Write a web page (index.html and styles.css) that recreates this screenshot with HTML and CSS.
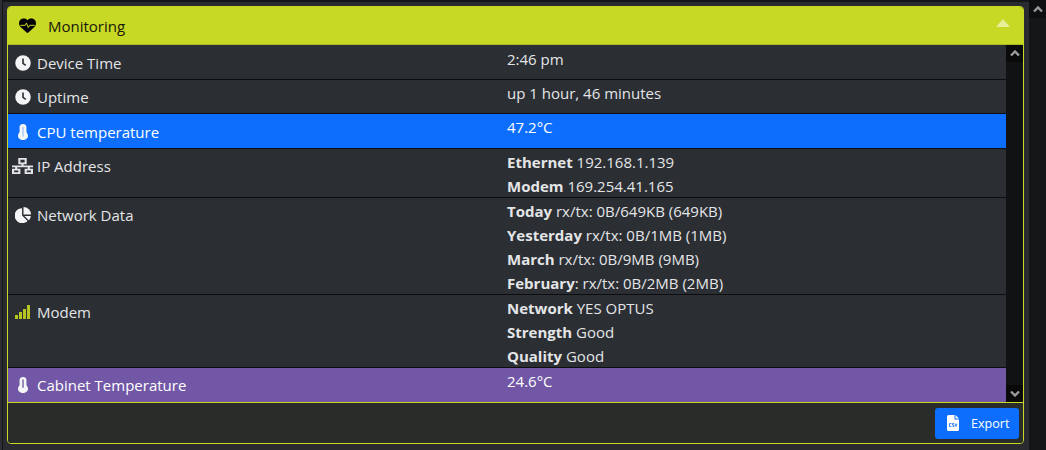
FILE: index.html
```html
<!DOCTYPE html>
<html lang="en">
<head>
<meta charset="utf-8">
<title>Monitoring</title>
<link rel="stylesheet" href="styles.css">
</head>
<body>
<div class="page">
  <main class="content">
    <section class="card">
      <header class="card-head">
        <svg class="head-icon" viewBox="0 0 512 512"><path d="M47.600 300.400L228.300 469.100c7.500 7 17.400 10.900 27.700 10.900s20.200-3.900 27.700-10.900L464.400 300.400c30.400-28.300 47.600-68 47.600-109.500v-5.800c0-69.900-50.500-129.500-119.400-141C347 36.500 300.600 51.400 268 84L256 96 244 84c-32.600-32.600-79-47.500-124.600-39.900C50.500 55.600 0 115.200 0 185.100v5.800c0 41.500 17.200 81.200 47.600 109.500z"/><path class="pulse" d="M40 250H190L225 180L280 320L320 250H472"/></svg>
        <span class="head-title">Monitoring</span>
        <span class="head-caret"></span>
      </header>
      <div class="card-body">
        <div class="rows">
          <div class="row h1">
            <div class="label"><svg class="ico" viewBox="0 0 512 512"><circle cx="256" cy="256" r="248" fill="currentColor"/><path class="hand" d="M256 110V270L345 330"/></svg>Device Time</div>
            <div class="val">2:46 pm</div>
          </div>
          <div class="row h2">
            <div class="label"><svg class="ico" viewBox="0 0 512 512"><circle cx="256" cy="256" r="248" fill="currentColor"/><path class="hand" d="M256 110V270L345 330"/></svg>Uptime</div>
            <div class="val">up 1 hour, 46 minutes</div>
          </div>
          <div class="row h3 blue">
            <div class="label"><svg class="ico" viewBox="0 0 320 512"><path fill="currentColor" d="M160 0C100 0 50 40 50 96v168C20 292 0 338 0 384c0 71 72 128 160 128s160-57 160-128c0-46-20-92-50-120V96C270 40 220 0 160 0z"/><path class="merc" d="M160 90V400"/></svg>CPU temperature</div>
            <div class="val">47.2°C</div>
          </div>
          <div class="row h4">
            <div class="label"><svg class="ico net" viewBox="0 0 20 18" preserveAspectRatio="none"><path fill="currentColor" fill-rule="evenodd" d="M6 0h8v7h-3v1.500h9v2h-3V12h3v6H12v-6h3v-1.500H5V12h3v6H0v-6h3v-1.500H0v-2h9V7H6V0zM8 2v3h4V2zM2 14v2h4v-2zM14 14v2h4v-2z"/></svg>IP Address</div>
            <div class="val"><b>Ethernet</b> 192.168.1.139<br><b>Modem</b> 169.254.41.165</div>
          </div>
          <div class="row h5">
            <div class="label"><svg class="ico" viewBox="0 0 17 17"><path fill="currentColor" d="M7.500 1.200A8 8 0 1 0 13.300 14.800L7.500 9z"/><path fill="currentColor" d="M9 0a8 8 0 0 1 8 8H9z"/><path fill="currentColor" d="M10 9.500h6.800a8 8 0 0 1-2 4.800z"/></svg>Network Data</div>
            <div class="val"><b>Today</b> rx/tx: 0B/649KB (649KB)<br><b>Yesterday</b> rx/tx: 0B/1MB (1MB)<br><b>March</b> rx/tx: 0B/9MB (9MB)<br><b>February</b>: rx/tx: 0B/2MB (2MB)</div>
          </div>
          <div class="row h6">
            <div class="label"><svg class="ico signal" viewBox="0 0 16 14"><rect x="0" y="10" width="3" height="4"/><rect x="4" y="7" width="3" height="7"/><rect x="8" y="4" width="3" height="10"/><rect x="12" y="0" width="3" height="14"/></svg>Modem</div>
            <div class="val"><b>Network</b> YES OPTUS<br><b>Strength</b> Good<br><b>Quality</b> Good</div>
          </div>
          <div class="row h7 purple">
            <div class="label"><svg class="ico" viewBox="0 0 320 512"><path fill="currentColor" d="M160 0C100 0 50 40 50 96v168C20 292 0 338 0 384c0 71 72 128 160 128s160-57 160-128c0-46-20-92-50-120V96C270 40 220 0 160 0z"/><path class="merc2" d="M160 80V340"/></svg>Cabinet Temperature</div>
            <div class="val">24.6°C</div>
          </div>
        </div>
        <div class="vbar">
          <div class="cell"><svg class="chev" viewBox="0 0 10 7"><path d="M1 5.500L5 1.500L9 5.500"/></svg></div>
          <div class="cell"><svg class="chev" viewBox="0 0 10 7"><path d="M1 1.500L5 5.500L9 1.500"/></svg></div>
        </div>
      </div>
      <footer class="card-foot">
        <button class="btn"><svg class="file" viewBox="0 0 12 16"><path fill="currentColor" d="M0 1.500A1.500 1.500 0 0 1 1.500 0H7.500V4.500H12V14.500A1.500 1.500 0 0 1 10.500 16H1.500A1.500 1.500 0 0 1 0 14.500z"/><path fill="currentColor" d="M8.500 0L12 3.500H8.500z"/><path class="csv" d="M4.500 8.500H2.500V11.500H4.500M7 8.500H5.500V10H7V11.500H5.500M8 8.500L9 11.500L10 8.500"/></svg><span>Export</span></button>
      </footer>
    </section>
  </main>
  <aside class="pagebar">
    <div class="cell top"><svg class="chev" viewBox="0 0 10 7"><path d="M1 5.500L5 1.500L9 5.500"/></svg></div>
  </aside>
</div>
</body>
</html>
```
FILE: styles.css
```css
* { box-sizing: border-box; }
html, body { margin: 0; height: 100%; overflow: hidden; }
body {
  background: #2b2e33;
  color: #e6e7e9;
  font: 15px/24px "Open Sans", "Noto Sans", sans-serif;
}
.page { display: flex; height: 450px; }
.content {
  width: 1027px;
  margin-left: 2px;
  padding: 4px 0 0 4px;
  border-left: 1px solid #141517;
  border-top: 2px solid #141517;
  background: #292b30;
}
.card {
  width: 1017px;
  height: 438px;
  border: 1px solid #c8d925;
  border-radius: 4px;
  display: flex;
  flex-direction: column;
  overflow: hidden;
  background: #2a2c2a;
}
.card-head {
  height: 38px;
  flex: none;
  display: flex;
  align-items: center;
  background: #c8d925;
  color: #17180a;
  padding: 0 13px 0 11px;
  border-bottom: 1px solid #abba1f;
}
.head-icon { width: 17px; height: 17px; margin-right: 12px; }
.pulse { fill: none; stroke: #c8d925; stroke-width: 30; }
.head-title { flex: 1; }
.head-caret {
  width: 0; height: 0;
  border: 7px solid transparent;
  border-top: 0;
  border-bottom: 8px solid #e6ee9a;
  margin-top: -5px;
}
.card-body { display: flex; height: 358px; flex: none; border-bottom: 1px solid #c8d925; }
.rows { flex: none; width: 998px; background: #2b2e33; }
.row { display: grid; grid-template-columns: 499px 499px; border-bottom: 1px solid #0c0d0e; color: #e4e5e7; }
.row:last-child { border-bottom: 0; }
.h1 { height: 35px; } .h2 { height: 34px; } .h3 { height: 35px; } .h4 { height: 49px; }
.h5 { height: 97px; } .h6 { height: 73px; } .h7 { height: 34px; }
.blue { background: #0d6efd; color: #fff; }
.purple { background: #7157a5; color: #fff; }
.label { display: flex; align-items: center; height: 24px; margin-top: 5px; padding-left: 7px; }
.h1 .label, .h3 .label { margin-top: 6px; }
.val { margin-top: 1px; }
.h1 .val { margin-top: 2px; }
.val b { font-weight: 700; }
.ico { width: 16px; height: 16px; margin-right: 6px; color: #f4f5f6; flex: none; }
.net { width: 21px; margin-left: -3px; margin-right: 4px; color: #e4e5e7; }
.hand { fill: none; stroke: #2b2e33; stroke-width: 52; }
.merc { fill: none; stroke: #7fb2fe; stroke-width: 30; }
.merc2 { fill: none; stroke: #7157a5; stroke-width: 44; }
.signal { fill: #b5c41f; }
.vbar {
  width: 17px; flex: none; background: #111214;
  display: flex; flex-direction: column; justify-content: space-between;
}
.cell { width: 17px; height: 17px; background: #0a0a0b; display: flex; align-items: center; justify-content: center; }
.chev { width: 10px; height: 7px; }
.chev path { fill: none; stroke: #9a9b9c; stroke-width: 2.4; }
.card-foot { flex: 1; display: flex; justify-content: flex-end; align-items: center; padding: 0 4px; background: #2a2c2a; }
.btn {
  width: 84px; height: 31px; border: 0; border-radius: 3px;
  background: #0d6efd; color: #fff;
  font: 12.6px "Open Sans", "Noto Sans", sans-serif;
  display: flex; align-items: center; padding: 0 0 0 12px;
}
.file { width: 12px; height: 16px; margin-right: 12px; }
.csv { fill: none; stroke: #0d6efd; stroke-width: 0.8; }
.pagebar { width: 17px; background: #151618; }
.top { height: 18px; background: #0e0f10; }
```
